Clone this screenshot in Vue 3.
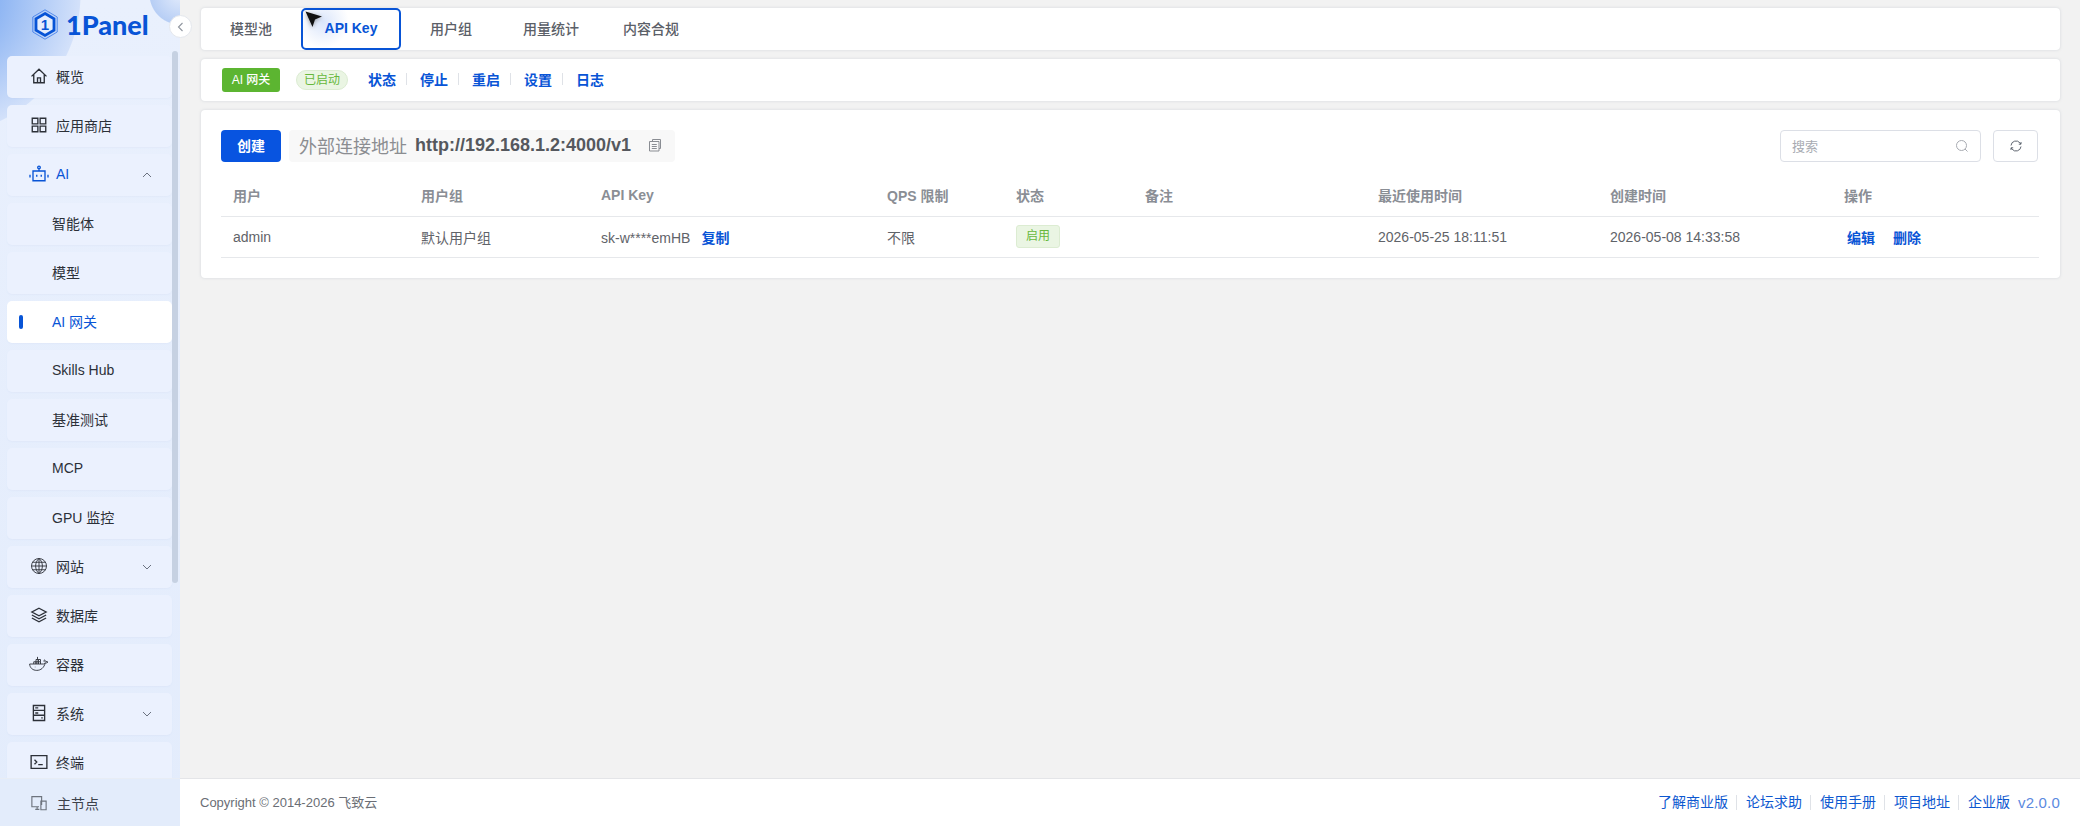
<script setup>
import { ref } from 'vue';

const icons = {
  home: 'M2 12.500 12 3l10 9.500 M5 10v11h14V10 M10 21v-6.500h4V21',
  apps: 'M3 3h7.500v7.500H3z M13.500 3H21v7.500h-7.500z M3 13.500h7.500V21H3z M13.500 13.500H21V21h-7.500z',
  robot: 'M4 8h16v13H4z M12 8V5 M12 1.500a1.700 1.700 0 1 0 0 3.400a1.700 1.700 0 1 0 0-3.400 M9 13v2.500 M15 13v2.500 M0 13v3.500 M24 13v3.500',
  globe: 'M12 2a10 10 0 1 0 0 20a10 10 0 1 0 0-20 M12 2v20 M2 12h20 M3.500 7h17 M3.500 17h17 M12 2c-6 5-6 15 0 20 M12 2c6 5 6 15 0 20',
  layers: 'M12 3 21.500 8 12 13 2.500 8z M2.500 12l9.500 5 9.500-5 M2.500 16l9.500 5 9.500-5',
  docker: 'M-.5 12h18.500c1.200 0 2-.6 2.300-1.500 1.200.3 2.700 0 3.700-1-.8-.8-2-1-3-.8-.2-1-.8-1.800-1.800-2.200-.6 1-.6 2.200.2 3.100 M-.5 12c.3 5 4 8.500 9.500 8.500 5.500 0 9.800-3.500 11.300-10 M5 12V9h3v3 M8 12V9h3v3 M11 12V9h3v3 M8 9V6h3v3 M11 9V6h3v3 M10 5.500V2.500 M6.500 16h.6',
  server: 'M4.500 2h15v20h-15z M4.500 8.500h15 M4.500 15h15 M7 5.200h4 M7 12h4 M15 18.500h2',
  terminal: 'M1.500 3.500h21v17h-21z M6 9l3 3-3 3 M11 15.500h6',
  device: 'M15.500 14.500V3.500H2.500V17H12 M7 20.500h5.500 M9.500 17v3.500 M15 9.500h6.500V21H14.500V9.500z'
};

const menus = [
  { label: '概览', icon: 'home' },
  { label: '应用商店', icon: 'apps' },
  { label: 'AI', icon: 'robot', arrow: 'up', open: true },
  { label: '智能体', sub: true },
  { label: '模型', sub: true },
  { label: 'AI 网关', sub: true, active: true },
  { label: 'Skills Hub', sub: true },
  { label: '基准测试', sub: true },
  { label: 'MCP', sub: true },
  { label: 'GPU 监控', sub: true },
  { label: '网站', icon: 'globe', arrow: 'down', fine: true },
  { label: '数据库', icon: 'layers' },
  { label: '容器', icon: 'docker', fine: true },
  { label: '系统', icon: 'server', arrow: 'down' },
  { label: '终端', icon: 'terminal' }
];

const tabs = ['模型池', 'API Key', '用户组', '用量统计', '内容合规'];
const activeTab = ref('API Key');
const actions = ['状态', '停止', '重启', '设置', '日志'];
const footerLinks = ['了解商业版', '论坛求助', '使用手册', '项目地址', '企业版'];
const columns = [
  { label: '用户', width: 188 },
  { label: '用户组', width: 180 },
  { label: 'API Key', width: 286 },
  { label: 'QPS 限制', width: 129 },
  { label: '状态', width: 129 },
  { label: '备注', width: 233 },
  { label: '最近使用时间', width: 232 },
  { label: '创建时间', width: 234 },
  { label: '操作', width: 207 }
];
</script>

<template>
  <div class="layout">
    <aside class="sidebar">
      <div class="logo">
        <svg class="logo-mark" viewBox="0 0 26 31">
          <path class="hex-outer" d="M13 .8 25.200 8v15L13 30.200.8 23V8z" />
          <path class="hex-inner" d="M13 4.500 22 9.800v11.400L13 26.500 4 21.200V9.800z" />
          <text x="13" y="21" text-anchor="middle" class="logo-one">1</text>
        </svg>
        <span class="logo-text">1Panel</span>
      </div>
      <button class="collapse">
        <svg viewBox="0 0 12 12"><path d="M7.500 2 3.500 6l4 4" /></svg>
      </button>
      <div class="menu-scroll">
        <ul class="menu">
          <li
            v-for="m in menus"
            :key="m.label"
            :class="['menu-item', { sub: m.sub, active: m.active, open: m.open }]"
          >
            <i v-if="m.active" class="active-bar"></i>
            <svg v-if="m.icon" :class="['menu-icon', { fine: m.fine }]" viewBox="0 0 24 24"><path :d="icons[m.icon]" /></svg>
            <span>{{ m.label }}</span>
            <svg v-if="m.arrow" class="arrow" viewBox="0 0 12 12">
              <path :d="m.arrow === 'up' ? 'M2 8l4-4 4 4' : 'M2 4l4 4 4-4'" />
            </svg>
          </li>
        </ul>
        <div class="scroll-thumb"></div>
      </div>
      <div class="side-foot">
        <svg class="menu-icon foot-icon" viewBox="0 0 24 24"><path :d="icons.device" /></svg>
        <span>主节点</span>
      </div>
    </aside>

    <div class="right">
      <main class="content">
        <nav class="card tabs">
          <div v-for="t in tabs" :key="t" :class="['tab', { current: t === activeTab }]">{{ t }}</div>
        </nav>

        <div class="card toolbar">
          <span class="app-tag">AI 网关</span>
          <span class="status-pill">已启动</span>
          <div class="actions">
            <a v-for="a in actions" :key="a">{{ a }}</a>
          </div>
        </div>

        <section class="card panel">
          <div class="panel-head">
            <button class="create">创建</button>
            <div class="address">
              <span class="addr-label">外部连接地址</span>
              <span class="addr-url">http://192.168.1.2:4000/v1</span>
              <svg class="copy" viewBox="0 0 14 14">
                <path d="M4.500 3V1.500h8v9H11 M1.500 3.500h9.500v9.500H1.500z M3.800 6.500h5 M3.800 8.500h5 M3.800 10.500h5" />
              </svg>
            </div>
            <div class="search">
              <span>搜索</span>
              <svg viewBox="0 0 14 14"><path d="M6.500 1.500a5 5 0 1 0 0 10a5 5 0 1 0 0-10 M10 10l2.500 2.500" /></svg>
            </div>
            <button class="refresh">
              <svg viewBox="0 0 14 14">
                <path d="M2 6.500a5 5 0 0 1 9-2.500l1 1 M12 3v2.200H9.800 M12 7.500a5 5 0 0 1-9 2.500l-1-1 M2 11V8.800h2.200" />
              </svg>
            </button>
          </div>

          <table class="grid">
            <colgroup><col v-for="c in columns" :key="c.label" :style="{ width: c.width + 'px' }" /></colgroup>
            <thead>
              <tr><th v-for="c in columns" :key="c.label">{{ c.label }}</th></tr>
            </thead>
            <tbody>
              <tr>
                <td>admin</td>
                <td>默认用户组</td>
                <td>sk-w****emHB<a class="link copy-link">复制</a></td>
                <td>不限</td>
                <td><span class="on-tag">启用</span></td>
                <td></td>
                <td>2026-05-25 18:11:51</td>
                <td>2026-05-08 14:33:58</td>
                <td><a class="link">编辑</a><a class="link second">删除</a></td>
              </tr>
            </tbody>
          </table>
        </section>
      </main>

      <footer class="foot">
        <span class="copyright">Copyright © 2014-2026 飞致云</span>
        <div class="foot-links">
          <a v-for="l in footerLinks" :key="l">{{ l }}</a>
          <span class="version">v2.0.0</span>
        </div>
      </footer>
    </div>

    <svg class="cursor" viewBox="0 0 18 18"><path d="M.5.5 17 5.500 10 8.500 7.500 16z" /></svg>
  </div>
</template>

<style scoped>
.layout {
  display: flex;
  height: 826px;
  overflow: hidden;
  position: relative;
  background: #f2f2f2;
}

.sidebar {
  width: 180px;
  flex: none;
  display: flex;
  flex-direction: column;
  position: relative;
  background:
    radial-gradient(circle at 180px -6px, #e3ecfc 0, #b7cef5 30px, transparent 31px),
    radial-gradient(circle at -60px -6px, #8fb6f3 60px, #d3e1fa 140px, transparent 141px),
    linear-gradient(180deg, #e9f0fd 0, #e3ecfc 100%);
}

.logo {
  height: 51px;
  flex: none;
  box-sizing: border-box;
  display: flex;
  align-items: center;
  padding: 0 0 2px 32px;
  gap: 8px;
}

.logo-mark {
  width: 26px;
  height: 31px;
}

.hex-outer {
  fill: none;
  stroke: #3a78e8;
  stroke-width: .8;
}

.hex-inner {
  fill: #e6eefd;
  stroke: #0854d6;
  stroke-width: 2.800;
}

.logo-one {
  font: 700 15px "Liberation Sans", sans-serif;
  fill: #0854d6;
}

.logo-text {
  font: 900 27px Lato, "Noto Sans", sans-serif;
  color: #0854d6;
}

.collapse {
  position: absolute;
  left: 169px;
  top: 15px;
  width: 23px;
  height: 23px;
  padding: 0;
  border: 1px solid #e4e7ed;
  border-radius: 50%;
  background: #fff;
  display: flex;
  align-items: center;
  justify-content: center;
  z-index: 2;
}

.collapse svg {
  width: 12px;
  height: 12px;
  fill: none;
  stroke: #8f959e;
  stroke-width: 1.100;
}

.menu-scroll {
  flex: 1;
  min-height: 0;
  overflow: hidden;
  position: relative;
}

.menu {
  list-style: none;
  margin: 0;
  padding: 5px 0 0 7px;
  width: 165px;
  box-sizing: content-box;
  display: flex;
  flex-direction: column;
  gap: 7px;
}

.menu-item {
  height: 42px;
  flex: none;
  box-sizing: border-box;
  display: flex;
  align-items: center;
  padding: 0 0 2px 23px;
  border-radius: 5px;
  background: #ebf1fe;
  box-shadow: 0 1px 2px rgba(120, 150, 210, .06);
  font-size: 14px;
  color: #2c3038;
  position: relative;
}

.menu-item.sub {
  padding-left: 45px;
}

.menu-item.open {
  color: #0854d6;
}

.menu-item.active {
  background: #fff;
  color: #0854d6;
}

.active-bar {
  position: absolute;
  left: 12px;
  top: 14px;
  width: 4px;
  height: 14px;
  border-radius: 2px;
  background: #0854d6;
}

.menu-icon {
  width: 18px;
  height: 18px;
  margin-right: 8px;
  fill: none;
  stroke: currentColor;
  stroke-width: 1.800;
  flex: none;
  overflow: visible;
}

.menu-icon.fine {
  stroke-width: 1.200;
}

.arrow {
  position: absolute;
  left: 134px;
  top: 15px;
  width: 12px;
  height: 12px;
  fill: none;
  stroke: #6b7280;
  stroke-width: 1;
}

.scroll-thumb {
  position: absolute;
  left: 172px;
  top: 0;
  width: 6px;
  height: 532px;
  border-radius: 3px;
  background: #c6d1e2;
}

.side-foot {
  height: 48px;
  flex: none;
  box-sizing: border-box;
  border-top: 1px solid #e8edf5;
  display: flex;
  align-items: center;
  padding-left: 30px;
  background: #e3ecfb;
  font-size: 14px;
  color: #3d424b;
}

.foot-icon {
  stroke: #6d737d;
  stroke-width: 1.500;
  margin-right: 9px;
}

.right {
  flex: 1;
  min-width: 0;
  display: flex;
  flex-direction: column;
}

.content {
  flex: 1;
  min-height: 0;
  padding: 8px 20px 0 21px;
  display: flex;
  flex-direction: column;
  gap: 9px;
}

.card {
  background: #fff;
  border-radius: 4px;
  box-shadow: 0 0 3px rgba(120, 130, 150, .25);
}

.tabs {
  height: 42px;
  flex: none;
  display: flex;
}

.tab {
  width: 100px;
  padding-bottom: 2px;
  display: flex;
  align-items: center;
  justify-content: center;
  box-sizing: border-box;
  font-size: 14px;
  font-weight: 500;
  color: #5b6068;
}

.tab.current {
  border: 2px solid #0854d6;
  border-radius: 5px;
  color: #0854d6;
  font-weight: 700;
  background: radial-gradient(circle at 20px 12px, #dbe6fb 0, #fff 26px);
}

.toolbar {
  height: 42px;
  flex: none;
  display: flex;
  align-items: center;
  padding-left: 21px;
}

.app-tag {
  width: 58px;
  height: 24px;
  line-height: 24px;
  text-align: center;
  border-radius: 3px;
  background: #5cb531;
  color: #fff;
  font-size: 12px;
  font-weight: 500;
}

.status-pill {
  margin-left: 16px;
  width: 52px;
  height: 20px;
  line-height: 18px;
  box-sizing: border-box;
  text-align: center;
  border: 1px solid #dcecd2;
  border-radius: 10px;
  background: #eaf5e3;
  color: #67b83c;
  font-size: 12px;
}

.actions {
  margin-left: 20px;
  padding-bottom: 2px;
  display: flex;
  align-items: center;
}

.actions a {
  width: 27px;
  font-size: 14px;
  font-weight: 700;
  color: #0854d6;
  margin-right: 25px;
  position: relative;
  white-space: nowrap;
}

.actions a:not(:last-child)::after {
  content: '';
  position: absolute;
  right: -12px;
  top: 4px;
  height: 12px;
  width: 1px;
  background: #dfe2e7;
}

.panel {
  height: 168px;
  flex: none;
  box-sizing: border-box;
  padding: 20px 21px 0 20px;
}

.panel-head {
  display: flex;
  align-items: center;
  height: 32px;
}

.create {
  width: 60px;
  height: 32px;
  padding: 0 0 2px;
  border: 0;
  border-radius: 4px;
  background: #0854e0;
  color: #fff;
  font-size: 14px;
  font-weight: 700;
  font-family: inherit;
}

.address {
  margin-left: 8px;
  width: 386px;
  height: 32px;
  box-sizing: border-box;
  padding: 0 13px 2px 10px;
  border-radius: 4px;
  background: #f8f8f8;
  display: flex;
  align-items: center;
}

.addr-label {
  font-size: 18px;
  color: #8b8d91;
}

.addr-url {
  margin-left: 8px;
  font-size: 18px;
  font-weight: 700;
  color: #55585e;
  white-space: nowrap;
}

.copy {
  margin-left: auto;
  width: 14px;
  height: 14px;
  fill: none;
  stroke: #8a8d93;
  stroke-width: 1;
}

.search {
  margin-left: auto;
  width: 201px;
  height: 32px;
  box-sizing: border-box;
  padding: 0 11px;
  border: 1px solid #dcdfe6;
  border-radius: 4px;
  display: flex;
  align-items: center;
  justify-content: space-between;
  font-size: 13px;
  color: #a8abb2;
}

.search span {
  padding-bottom: 2px;
}

.search svg {
  width: 14px;
  height: 14px;
  fill: none;
  stroke: #a8abb2;
}

.refresh {
  margin: 0 1px 0 12px;
  width: 45px;
  height: 32px;
  padding: 0;
  background: #fff;
  border: 1px solid #dcdfe6;
  border-radius: 4px;
  display: flex;
  align-items: center;
  justify-content: center;
}

.refresh svg {
  width: 14px;
  height: 14px;
  fill: none;
  stroke: #5f6670;
}

.grid {
  margin-top: 8px;
  width: 1818px;
  table-layout: fixed;
  border-collapse: collapse;
  font-size: 14px;
}

.grid th {
  height: 46px;
  padding: 5px 12px 0;
  box-sizing: border-box;
  text-align: left;
  font-weight: 700;
  color: #8a8e95;
  border-bottom: 1px solid #e6e8eb;
}

.grid td {
  height: 40px;
  padding: 0 12px;
  color: #5f6369;
  border-bottom: 1px solid #e6e8eb;
  white-space: nowrap;
}

.link {
  color: #0854d6;
  font-weight: 700;
  margin-left: 3px;
}

.copy-link {
  margin-left: 11px;
}

.second {
  margin-left: 18px;
}

.on-tag {
  display: block;
  width: 44px;
  height: 23px;
  line-height: 21px;
  box-sizing: border-box;
  text-align: center;
  border: 1px solid #dcecd2;
  border-radius: 3px;
  background: #eaf5e3;
  color: #67b83c;
  font-size: 12px;
}

.foot {
  height: 48px;
  flex: none;
  box-sizing: border-box;
  padding: 0 20px;
  border-top: 1px solid #e4e5e8;
  background: #fff;
  display: flex;
  align-items: center;
  justify-content: space-between;
}

.copyright {
  font-size: 13px;
  color: #6a6e75;
  padding-bottom: 3px;
}

.foot-links {
  display: flex;
  align-items: center;
  font-size: 14px;
  color: #0d58d0;
}

.foot-links a {
  padding: 0 8.500px;
  border-right: 1px solid #dfe2e7;
  line-height: 15px;
}

.foot-links a:last-of-type {
  border-right: 0;
  padding-right: 0;
}

.version {
  margin-left: 8px;
  font-size: 15px;
  letter-spacing: .2px;
  color: #5c8adf;
}

.cursor {
  position: absolute;
  left: 305px;
  top: 11px;
  width: 18px;
  height: 18px;
  fill: #111;
  filter: drop-shadow(0 1px 2px rgba(0, 0, 0, .35));
}
</style>

<style>
html, body {
  margin: 0;
  height: 100%;
  overflow: hidden;
}

body {
  font-family: "Liberation Sans", "Noto Sans CJK SC", sans-serif;
}
</style>
